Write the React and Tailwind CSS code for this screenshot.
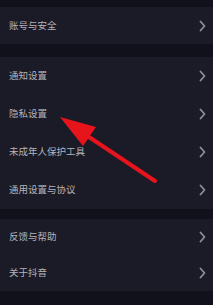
import React from "react";

const font = { fontFamily: '"Noto Sans CJK SC", "Noto Sans", sans-serif' };

const Chevron = () => (
  <svg width="7" height="12" viewBox="0 0 7 12" fill="none">
    <path d="M1.5 1.5 L5.5 6 L1.5 10.5" stroke="#8e8e96" strokeWidth="1.8" strokeLinecap="round" strokeLinejoin="round" />
  </svg>
);

const Row = ({ label, h }) => (
  <div className={`flex items-center justify-between pl-[9px] pr-[7px] ${h}`}>
    <span className="text-[9.5px] text-[#b4b4bc] leading-none">{label}</span>
    <Chevron />
  </div>
);

const groups = [
  { rows: ["账号与安全"], h: "h-[37px]" },
  { rows: ["通知设置", "隐私设置", "未成年人保护工具", "通用设置与协议"], h: "h-[38px]" },
  { rows: ["反馈与帮助", "关于抖音"], h: "h-[36px]" },
];

export default function App() {
  return (
    <div className="relative w-[213px] h-[305px] overflow-hidden bg-[#11111b]" style={font}>
      <div className="flex flex-col pt-[7px]">
        <div className="bg-[#1a1b26]">
          <Row label={groups[0].rows[0]} h={groups[0].h} />
        </div>
        <div className="h-[13px]" />
        <div className="bg-[#1a1b26]">
          {groups[1].rows.map((r) => (
            <Row key={r} label={r} h={groups[1].h} />
          ))}
        </div>
        <div className="h-[10px]" />
        <div className="bg-[#1a1b26]">
          {groups[2].rows.map((r) => (
            <Row key={r} label={r} h={groups[2].h} />
          ))}
        </div>
      </div>
      {/* red annotation arrow */}
      <svg className="absolute left-0 top-0" width="213" height="305" viewBox="0 0 213 305">
        <line x1="155" y1="181" x2="80" y2="131" stroke="#e8141c" strokeWidth="4" strokeLinecap="round" />
        <polygon points="60,117 96,127 83,146" fill="#e8141c" />
      </svg>
    </div>
  );
}
